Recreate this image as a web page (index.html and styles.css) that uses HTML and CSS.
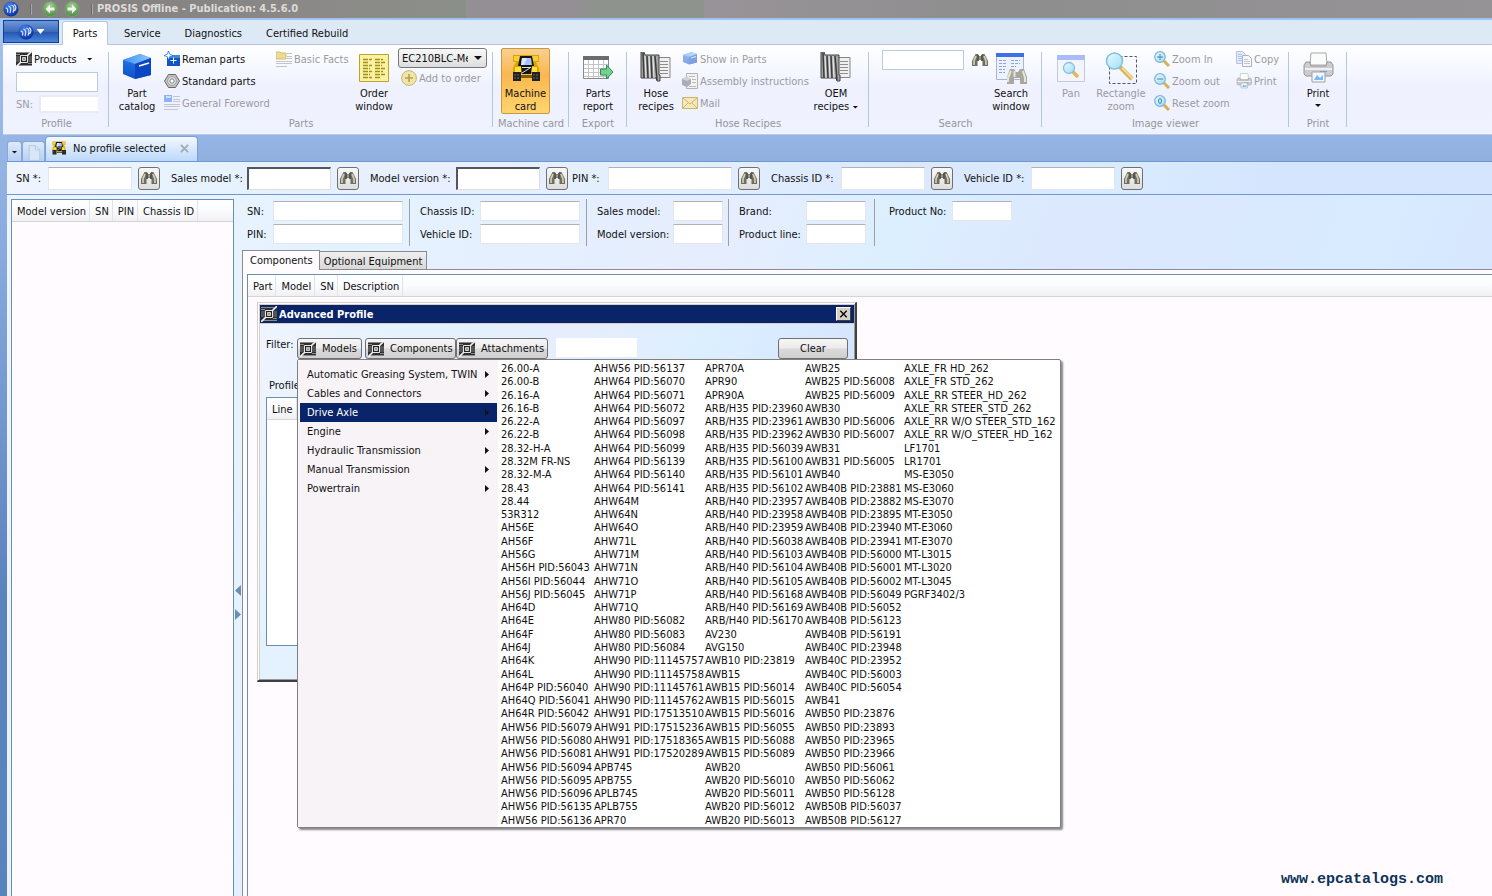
FILE: index.html
```html
<!DOCTYPE html>
<html lang="en">
<head>
<meta charset="utf-8">
<title>PROSIS Offline - Publication: 4.5.6.0</title>
<link rel="stylesheet" href="styles.css">
</head>
<body>
<svg class="sprite" aria-hidden="true">
  <defs>
    <radialGradient id="orb" cx="40%" cy="30%" r="70%"><stop offset="0" stop-color="#4a86f0"/><stop offset="1" stop-color="#0a2fa0"/></radialGradient>
    <radialGradient id="green" cx="50%" cy="30%" r="70%"><stop offset="0" stop-color="#a6cf96"/><stop offset="1" stop-color="#4f8a45"/></radialGradient>
    <linearGradient id="lens" x1="0" y1="0" x2="1" y2="1"><stop offset="0" stop-color="#e4fbff"/><stop offset="1" stop-color="#a5dcf5"/></linearGradient>
    <linearGradient id="top" x1="0" x2="1"><stop offset="0" stop-color="#3f93f2"/><stop offset="1" stop-color="#8cc6ff"/></linearGradient>
    <linearGradient id="front" x1="0" y1="0" x2="0" y2="1"><stop offset="0" stop-color="#2a7bea"/><stop offset="1" stop-color="#0f4fc8"/></linearGradient>
    <symbol id="i-orb" viewBox="0 0 16 16"><circle cx="8" cy="8" r="7.600" fill="url(#orb)"/><path d="M2.500 7q3 0 2 4.500M5.500 5q3.500 1 1.500 7M8.500 4q4 1.500 1.500 7.500M11 3.500q3.500 2.500.5 6.500" fill="none" stroke="#d8e8ff" stroke-width="1.200"/></symbol>
    <symbol id="i-back" viewBox="0 0 16 16"><circle cx="8" cy="8" r="7.500" fill="url(#green)" stroke="#7a9a70"/><path d="M8 3.500 3.500 8 8 12.500V9.500h4.500v-3H8z" fill="#eef5ea"/></symbol>
    <symbol id="i-product" viewBox="0 0 16 16"><path d="M0 1h16v14H0z" fill="#2e2e2e"/><path d="M0 1.500h13M0 3.500h4M12 12.500h4M1 14.500h15" stroke="#8b8b8b"/><path d="M0 5h4v6H0zM12 5h4v6h-4z" fill="#555"/><path d="M4.500 4.500h7v7h-7z" fill="#222" stroke="#e4e4e4"/><path d="M6.500 6.500h3v3h-3z" fill="#999" stroke="#ccc"/><path d="m11 5 5-5M0 16l5-5" stroke="#f4f4f4" stroke-width="1.600"/></symbol>
    <symbol id="i-cube" viewBox="0 0 32 32"><path d="M2 8 19 2l11 4v17L14 27 2 22z" fill="url(#front)"/><path d="M2 8 19 2l11 4-16 6z" fill="url(#top)"/><path d="m14 12 16-6v17l-16 4z" fill="#0b47c4"/><path d="m18 14 10-3" stroke="#fff" stroke-width="1.600"/></symbol>
    <symbol id="i-reman" viewBox="0 0 16 16"><path d="M3 4h13v11H3z" fill="#0d56c4"/><path d="M3 4h13v3H3z" fill="#3c86e4"/><path d="M9.500 6.500v6M6.500 9.500h6" stroke="#fff"/><path d="m4.500 0 1.200 3.300L9 4.500 5.700 5.700 4.500 9 3.300 5.700 0 4.500l3.300-1.200z" fill="#fff" stroke="#2c74d4" stroke-width=".8"/></symbol>
    <symbol id="i-nut" viewBox="0 0 16 16"><path d="M4.500 1.500h7L15.500 8l-4 6.500h-7L.5 8z" fill="#c4c4c0" stroke="#666"/><circle cx="8" cy="8" r="4.300" fill="#eee" stroke="#999"/><circle cx="8" cy="8" r="2.200" fill="#fff" stroke="#777"/></symbol>
    <symbol id="i-fore" viewBox="0 0 16 16"><path d="M0 0h8v7H0z" fill="#8ab4f5"/><path d="M2 1h5v2H2z" fill="#cfe0ff"/><path d="M9 1.500h7M9 4.500h7M9 6.500h7M0 9.500h16M0 11.500h16M0 14.500h14" stroke="#c3c3d3"/></symbol>
    <symbol id="i-facts" viewBox="0 0 16 16"><path d="M0 1h4l1 1h5v6H0z" fill="#eddb96" stroke="#d3bd6d"/><path d="M11 2.500h5M11 5.500h5M11 7.500h5M0 10.500h16M0 12.500h16M0 15.500h11" stroke="#c3c3cf"/></symbol>
    <symbol id="i-order" viewBox="0 0 32 32"><path d="M1.500 2.500h29v27h-29z" fill="#faf2a0" stroke="#b8a432"/><path d="M5 7.500h9M5 10.500h6M5 13.500h9M5 16.500h7M5 19.500h9M5 22.500h7M5 25.500h9M17 7.500h8M17 10.500h10M17 13.500h7M17 16.500h10M17 19.500h8M17 22.500h10M17 25.500h6" stroke="#a5901e" stroke-width="1.300" stroke-dasharray="5 1"/></symbol>
    <symbol id="i-add" viewBox="0 0 16 16"><circle cx="8" cy="8" r="7.400" fill="#efe4ab" stroke="#c6b66c"/><path d="M8 4v8M4 8h8" stroke="#b5a04a" stroke-width="1.600"/></symbol>
    <symbol id="i-truck" viewBox="0 0 32 32"><path d="M3 3h26v7h-3l3 6v6H3v-6l3-6H3z" fill="#d9a600"/><path d="M4 4h6v5H4zM22 4h6v5h-6z" fill="#f7cf32"/><path d="M10 4h12l2 10H8z" fill="#161616"/><path d="M12 6h9l1 7H11z" fill="#a9c2fb"/><path d="M12 6h5l-3 7h-3z" fill="#dbe6ff"/><path d="M5 15h6v5H5zM21 15h6v5h-6z" fill="#ffe03c"/><path d="M11 14h11l-1 8h-9z" fill="#151515"/><path d="m12 21 8-5M12 15.500h9" stroke="#ddd"/><path d="M3 20h8v9H3zM22 20h8v9h-8z" fill="#222"/><path d="M4 23h6M4 26h6M23 23h6M23 26h6" stroke="#666" stroke-dasharray="2 1"/><path d="M11 23h11v3H11z" fill="#7a5f00"/></symbol>
    <symbol id="i-report" viewBox="0 0 32 32"><path d="M1.500 4.500h25v22h-25z" fill="#fff" stroke="#8a8a8a"/><path d="M1 4h26v4H1z" fill="#6b6b6b"/><path d="M6.500 8v18M11.500 8v18M16.500 8v18M21.500 8v18M2 12.500h24M2 16.500h24M2 20.500h24M2 24.500h24" stroke="#c4c4c4"/><path d="M18.500 17h6v-4l6.500 7-6.500 7v-4h-6z" fill="#74d08e" stroke="#2f8a55"/></symbol>
    <symbol id="i-hose" viewBox="0 0 32 32"><path d="M17 5.500h13v20H17z" fill="#f0f0f0" stroke="#858585"/><path d="M20 9.500h8M20 12.500h8M20 15.500h8M20 18.500h8M20 21.500h8" stroke="#8e8e8e"/><path d="M1 0h3l1 3h14v20h1v6h-3l-1-3H1z" fill="#a4a4a4" stroke="#444"/><path d="m3 1 1 25M7 4l1 22M11 4l1 22M15 4l2 24" stroke="#3c3c3c" stroke-width="1.500"/><path d="m5 4 1 22M9 4l1 22M13 4l1 22" stroke="#eee"/></symbol>
    <symbol id="i-asm" viewBox="0 0 16 16"><path d="M4.500.5h11v15h-11z" fill="#f2f2f2" stroke="#b3b3b3"/><path d="M7 3.500h6M10 6.500h4M10 9.500h4M7 13.500h7" stroke="#bbb"/><path d="m0 6 4-2 5 2v5l-4 3-5-2z" fill="#a9adb5"/><path d="m0 6 4-2 5 2-4 2z" fill="#d0d3d8"/></symbol>
    <symbol id="i-mail" viewBox="0 0 16 16"><path d="M.5 2.500h15v11H.5z" fill="#f4e9b8" stroke="#c9b671"/><path d="m1 3 7 6 7-6M1 13l5-5M15 13l-5-5" fill="none" stroke="#c9b671"/></symbol>
    <symbol id="i-bino" viewBox="0 0 16 16"><path d="M3.500 2H6l1 2h2l1-2h2.500L16 9v5h-5.500V9h-1L9 8H7L6.500 9h-1v5H0V9z" fill="#6f6e62"/><path d="M4 4 2 9v4M12 4l2 5v4" fill="none" stroke="#d0cdb9" stroke-width="1.700"/><path d="M6 3v6M10 3v6" stroke="#3f3e37"/><path d="M7.500 4.500h1v3h-1z" fill="#c5c2b0"/></symbol>
    <symbol id="i-searchwin" viewBox="0 0 32 32"><path d="M1.500 1.500h27v26h-27z" fill="#edf2ff" stroke="#a8b4d8"/><path d="M1 1h28v4H1z" fill="#3f6fe8"/><path d="M4 8.500h8M16 8.500h9M4 11.500h8M4 14.500h8M4 17.500h6M4 20.500h6M16 11.500h9M16 14.500h5" stroke="#8fa4dd" stroke-dasharray="3 1"/><path d="M15 17h4l2 3h2l2-3h4l3 8v7h-7v-6h-6v6h-7v-7z" fill="#aaa79c"/><path d="m16 19-3 7v4M28 19l2 7v4M19.500 19v6" fill="none" stroke="#e8e5d8" stroke-width="2"/></symbol>
    <symbol id="i-pan" viewBox="0 0 32 32"><path d="M2.500 3.500h27v26h-27z" fill="#f4f5fa" stroke="#c4c8d8"/><path d="M2 3h28v5H2z" fill="#a9bcf7"/><path d="m17 19 6 6" stroke="#e0b95c" stroke-width="3.500"/><circle cx="14" cy="16" r="5.500" fill="url(#lens)" stroke="#84bfe0" stroke-width="1.300"/></symbol>
    <symbol id="i-rect" viewBox="0 0 32 32"><path d="M4.500 4.500h27v27h-27z" fill="none" stroke="#555" stroke-dasharray="3 2"/><path d="m15 15 12 12" stroke="#d7b55c" stroke-width="4.500"/><path d="m17 16 11 11" stroke="#f8e29e" stroke-width="1.500"/><circle cx="9.500" cy="9" r="8" fill="url(#lens)" stroke="#80bfe2" stroke-width="1.500"/></symbol>
    <symbol id="i-mag" viewBox="0 0 16 16"><path d="m10 10 5 5" stroke="#d9b04f" stroke-width="3"/><circle cx="6" cy="6" r="5.300" fill="url(#lens)" stroke="#79b5d8" stroke-width="1.200"/></symbol>
    <symbol id="i-copy" viewBox="0 0 16 16"><path d="M.5.5h6l3 3v9h-9z" fill="#e3eaff" stroke="#b5c2ea"/><path d="M2 3.500h4M2 5.500h5M2 7.500h5M2 9.500h5" stroke="#b5c2ea"/><path d="M6.500 4.500h6l3 3v8h-9z" fill="#f6f6fb" stroke="#b0b0ba"/><path d="M8 8.500h4M8 10.500h6M8 12.500h6" stroke="#c4c4cc"/></symbol>
    <symbol id="i-print" viewBox="0 0 32 32"><path d="M9 1h15l1 12H8z" fill="#fbfbfb" stroke="#a8a8a8"/><path d="M4 10h4l1 4h15l1-4h4l2 3v9l-2 2H4l-2-2v-9z" fill="#cbcbd0" stroke="#989898"/><path d="M4 14h26M3 16h27v2H3z" fill="#efeff2"/><path d="M18 19.500h7" stroke="#5aa7ee"/><path d="M10 20h13v10H10z" fill="#f0f7ff" stroke="#a0a0a0"/><path d="m12 28 3-5 3 3 3-3v5z" fill="#79b9f2"/></symbol>
    <symbol id="i-page" viewBox="0 0 16 18"><path d="M2.500.5h7l5 5v12h-12z" fill="#d9e6f8" stroke="#b4c8e2"/><path d="M9.500.5v5h5" fill="none" stroke="#b4c8e2"/></symbol>
  </defs>
</svg>

<header class="titlebar">
  <svg class="ic"><use href="#i-orb"/></svg>
  <span class="bar"></span>
  <button class="plain" aria-label="Back"><svg class="ic"><use href="#i-back"/></svg></button>
  <button class="plain flip" aria-label="Forward"><svg class="ic"><use href="#i-back"/></svg></button>
  <span class="bar"></span>
  <h1>PROSIS Offline - Publication: 4.5.6.0</h1>
</header>

<div class="ribbon">
  <nav class="ribbon-tabs">
    <button class="app-button" aria-label="Application menu"><svg class="ic"><use href="#i-orb"/></svg><i class="down white"></i></button>
    <button class="rtab active">Parts</button>
    <button class="rtab">Service</button>
    <button class="rtab">Diagnostics</button>
    <button class="rtab">Certified Rebuild</button>
  </nav>
  <div class="groups">
    <section class="group g-profile">
      <div class="gbody stack">
        <button class="small"><svg class="ic"><use href="#i-product"/></svg>Products<i class="down"></i></button>
        <input class="box profile-name" type="text" aria-label="Profile name">
        <div class="sn-row"><label for="psn">SN:</label><input id="psn" class="field" type="text" disabled></div>
      </div>
      <h2>Profile</h2>
    </section>
    <section class="group g-parts">
      <div class="gbody">
        <button class="big"><svg class="ic32"><use href="#i-cube"/></svg><span>Part<br>catalog</span></button>
        <div class="stack">
          <button class="small"><svg class="ic"><use href="#i-reman"/></svg>Reman parts</button>
          <button class="small"><svg class="ic"><use href="#i-nut"/></svg>Standard parts</button>
          <button class="small" disabled><svg class="ic"><use href="#i-fore"/></svg>General Foreword</button>
        </div>
        <div class="stack"><button class="small" disabled><svg class="ic"><use href="#i-facts"/></svg>Basic Facts</button></div>
        <button class="big"><svg class="ic32"><use href="#i-order"/></svg><span>Order<br>window</span></button>
        <div class="stack">
          <div class="combo"><select aria-label="Order"><option>EC210BLC-Me</option></select><i class="down"></i></div>
          <button class="small add" disabled><svg class="ic"><use href="#i-add"/></svg>Add to order</button>
        </div>
      </div>
      <h2>Parts</h2>
    </section>
    <section class="group g-machine">
      <div class="gbody"><button class="big hot"><svg class="ic32"><use href="#i-truck"/></svg><span>Machine<br>card</span></button></div>
      <h2>Machine card</h2>
    </section>
    <section class="group g-export">
      <div class="gbody"><button class="big"><svg class="ic32"><use href="#i-report"/></svg><span>Parts<br>report</span></button></div>
      <h2>Export</h2>
    </section>
    <section class="group g-hose">
      <div class="gbody">
        <button class="big"><svg class="ic32"><use href="#i-hose"/></svg><span>Hose<br>recipes</span></button>
        <div class="stack">
          <button class="small" disabled><svg class="ic faded"><use href="#i-cube"/></svg>Show in Parts</button>
          <button class="small" disabled><svg class="ic"><use href="#i-asm"/></svg>Assembly instructions</button>
          <button class="small" disabled><svg class="ic"><use href="#i-mail"/></svg>Mail</button>
        </div>
        <button class="big"><svg class="ic32"><use href="#i-hose"/></svg><span>OEM<br>recipes <i class="down"></i></span></button>
      </div>
      <h2>Hose Recipes</h2>
    </section>
    <section class="group g-search">
      <div class="gbody">
        <div class="quick"><input class="box" type="text" aria-label="Search"><button class="plain" aria-label="Search"><svg class="ic"><use href="#i-bino"/></svg></button></div>
        <button class="big"><svg class="ic32"><use href="#i-searchwin"/></svg><span>Search<br>window</span></button>
      </div>
      <h2>Search</h2>
    </section>
    <section class="group g-image">
      <div class="gbody">
        <button class="big" disabled><svg class="ic32"><use href="#i-pan"/></svg><span>Pan</span></button>
        <button class="big" disabled><svg class="ic32"><use href="#i-rect"/></svg><span>Rectangle<br>zoom</span></button>
        <div class="stack">
          <button class="small" disabled><svg class="ic" viewBox="0 0 16 16"><use href="#i-mag"/><path d="M3 6h6M6 3v6" stroke="#4b86ad"/></svg>Zoom In</button>
          <button class="small" disabled><svg class="ic" viewBox="0 0 16 16"><use href="#i-mag"/><path d="M3 6h6" stroke="#4b86ad"/></svg>Zoom out</button>
          <button class="small" disabled><svg class="ic" viewBox="0 0 16 16"><use href="#i-mag"/><ellipse cx="6" cy="6" rx="1.500" ry="2.500" fill="none" stroke="#4b86ad"/></svg>Reset zoom</button>
        </div>
        <div class="stack">
          <button class="small" disabled><svg class="ic"><use href="#i-copy"/></svg>Copy</button>
          <button class="small" disabled><svg class="ic"><use href="#i-print"/></svg>Print</button>
        </div>
      </div>
      <h2>Image viewer</h2>
    </section>
    <section class="group g-print">
      <div class="gbody"><button class="big"><svg class="ic32"><use href="#i-print"/></svg><span>Print</span><i class="down"></i></button></div>
      <h2>Print</h2>
    </section>
  </div>
</div>

<div class="workspace">
  <div class="doc-tabs">
    <button class="doc-mini" aria-label="Tab list"><i class="down"></i></button>
    <button class="doc-mini page" aria-label="New tab"><svg><use href="#i-page"/></svg></button>
    <div class="doc-tab"><svg class="ic"><use href="#i-truck"/></svg><span>No profile selected</span><button class="plain close" aria-label="Close tab"><svg viewBox="0 0 10 10"><path d="m1 1 8 8M9 1 1 9" stroke="#a4a9b2" stroke-width="2"/></svg></button></div>
  </div>

  <form class="filters">
    <div class="f"><label for="f1">SN *:</label><input id="f1" class="field" type="text"><button type="button" class="find" aria-label="Find SN"><svg class="ic"><use href="#i-bino"/></svg></button></div>
    <div class="f f-sales"><label for="f2">Sales model *:</label><input id="f2" class="field sunk" type="text"><button type="button" class="find" aria-label="Find sales model"><svg class="ic"><use href="#i-bino"/></svg></button></div>
    <div class="f f-version"><label for="f3">Model version *:</label><input id="f3" class="field sunk" type="text"><button type="button" class="find" aria-label="Find model version"><svg class="ic"><use href="#i-bino"/></svg></button></div>
    <div class="f f-pin"><label for="f4">PIN *:</label><input id="f4" class="field" type="text"><button type="button" class="find" aria-label="Find PIN"><svg class="ic"><use href="#i-bino"/></svg></button></div>
    <div class="f f-chassis"><label for="f5">Chassis ID *:</label><input id="f5" class="field" type="text"><button type="button" class="find" aria-label="Find chassis"><svg class="ic"><use href="#i-bino"/></svg></button></div>
    <div class="f f-vehicle"><label for="f6">Vehicle ID *:</label><input id="f6" class="field" type="text"><button type="button" class="find" aria-label="Find vehicle"><svg class="ic"><use href="#i-bino"/></svg></button></div>
  </form>

  <main class="main">
    <aside class="left-list">
      <table><thead><tr><th>Model version</th><th>SN</th><th>PIN</th><th>Chassis ID</th><td></td></tr></thead></table>
    </aside>
    <div class="splitter"><i class="tri left"></i><i class="tri right"></i></div>
    <div class="detail">
      <form class="info">
        <div class="pair p1"><label for="d1">SN:</label><input id="d1" class="field" type="text"><label for="d2">PIN:</label><input id="d2" class="field" type="text"></div>
        <div class="pair p2"><label for="d3">Chassis ID:</label><input id="d3" class="field" type="text"><label for="d4">Vehicle ID:</label><input id="d4" class="field" type="text"></div>
        <div class="pair p3"><label for="d5">Sales model:</label><input id="d5" class="field" type="text"><label for="d6">Model version:</label><input id="d6" class="field" type="text"></div>
        <div class="pair p4"><label for="d7">Brand:</label><input id="d7" class="field" type="text"><label for="d8">Product line:</label><input id="d8" class="field" type="text"></div>
        <div class="pair p5"><label for="d9">Product No:</label><input id="d9" class="field" type="text"></div>
      </form>
      <div class="tabs"><button class="tab active">Components</button><button class="tab">Optional Equipment</button></div>
      <div class="pane">
        <div class="grid">
          <table><thead><tr><th>Part</th><th>Model</th><th>SN</th><th>Description</th><td></td></tr></thead></table>
        </div>
        <span class="site">www.epcatalogs.com</span>

        <div class="dialog" role="dialog" aria-labelledby="dlg">
          <div class="dlg-title"><svg class="ic"><use href="#i-product"/></svg><h2 id="dlg">Advanced Profile</h2><button class="dlg-close" aria-label="Close"><svg viewBox="0 0 10 10"><path d="m1 1 8 8M9 1 1 9" stroke="#000" stroke-width="1.600"/></svg></button></div>
          <div class="dlg-body">
            <div class="dlg-filter">
              <label for="flt">Filter:</label>
              <button class="push w1"><svg class="ic"><use href="#i-product"/></svg>Models</button>
              <button class="push w2"><svg class="ic"><use href="#i-product"/></svg>Components</button>
              <button class="push w3"><svg class="ic"><use href="#i-product"/></svg>Attachments</button>
              <input id="flt" class="flat" type="text">
              <button class="push clear">Clear</button>
            </div>
            <h3>Profile</h3>
            <div class="profile-grid"><table><thead><tr><th>Line</th><td></td></tr></thead></table></div>
          </div>

          <div class="menu">
            <ul class="cats">
              <li>Automatic Greasing System, TWIN<i class="sub"></i></li>
              <li>Cables and Connectors<i class="sub"></i></li>
              <li class="on">Drive Axle<i class="sub"></i></li>
              <li>Engine<i class="sub"></i></li>
              <li>Hydraulic Transmission<i class="sub"></i></li>
              <li>Manual Transmission<i class="sub"></i></li>
              <li>Powertrain<i class="sub"></i></li>
            </ul>
            <ul class="models">
              <li>26.00-A<li>26.00-B<li>26.16-A<li>26.16-B<li>26.22-A<li>26.22-B<li>28.32-H-A<li>28.32M FR-NS<li>28.32-M-A<li>28.43<li>28.44<li>53R312<li>AH56E<li>AH56F<li>AH56G<li>AH56H PID:56043<li>AH56I PID:56044<li>AH56J PID:56045<li>AH64D<li>AH64E<li>AH64F<li>AH64J<li>AH64K<li>AH64L<li>AH64P PID:56040<li>AH64Q PID:56041<li>AH64R PID:56042<li>AHW56 PID:56079<li>AHW56 PID:56080<li>AHW56 PID:56081<li>AHW56 PID:56094<li>AHW56 PID:56095<li>AHW56 PID:56096<li>AHW56 PID:56135<li>AHW56 PID:56136
              <li>AHW56 PID:56137<li>AHW64 PID:56070<li>AHW64 PID:56071<li>AHW64 PID:56072<li>AHW64 PID:56097<li>AHW64 PID:56098<li>AHW64 PID:56099<li>AHW64 PID:56139<li>AHW64 PID:56140<li>AHW64 PID:56141<li>AHW64M<li>AHW64N<li>AHW64O<li>AHW71L<li>AHW71M<li>AHW71N<li>AHW71O<li>AHW71P<li>AHW71Q<li>AHW80 PID:56082<li>AHW80 PID:56083<li>AHW80 PID:56084<li>AHW90 PID:11145757<li>AHW90 PID:11145758<li>AHW90 PID:11145761<li>AHW90 PID:11145762<li>AHW91 PID:17513510<li>AHW91 PID:17515236<li>AHW91 PID:17518365<li>AHW91 PID:17520289<li>APB745<li>APB755<li>APLB745<li>APLB755<li>APR70
              <li>APR70A<li>APR90<li>APR90A<li>ARB/H35 PID:23960<li>ARB/H35 PID:23961<li>ARB/H35 PID:23962<li>ARB/H35 PID:56039<li>ARB/H35 PID:56100<li>ARB/H35 PID:56101<li>ARB/H35 PID:56102<li>ARB/H40 PID:23957<li>ARB/H40 PID:23958<li>ARB/H40 PID:23959<li>ARB/H40 PID:56038<li>ARB/H40 PID:56103<li>ARB/H40 PID:56104<li>ARB/H40 PID:56105<li>ARB/H40 PID:56168<li>ARB/H40 PID:56169<li>ARB/H40 PID:56170<li>AV230<li>AVG150<li>AWB10 PID:23819<li>AWB15<li>AWB15 PID:56014<li>AWB15 PID:56015<li>AWB15 PID:56016<li>AWB15 PID:56055<li>AWB15 PID:56088<li>AWB15 PID:56089<li>AWB20<li>AWB20 PID:56010<li>AWB20 PID:56011<li>AWB20 PID:56012<li>AWB20 PID:56013
              <li>AWB25<li>AWB25 PID:56008<li>AWB25 PID:56009<li>AWB30<li>AWB30 PID:56006<li>AWB30 PID:56007<li>AWB31<li>AWB31 PID:56005<li>AWB40<li>AWB40B PID:23881<li>AWB40B PID:23882<li>AWB40B PID:23895<li>AWB40B PID:23940<li>AWB40B PID:23941<li>AWB40B PID:56000<li>AWB40B PID:56001<li>AWB40B PID:56002<li>AWB40B PID:56049<li>AWB40B PID:56052<li>AWB40B PID:56123<li>AWB40B PID:56191<li>AWB40C PID:23948<li>AWB40C PID:23952<li>AWB40C PID:56003<li>AWB40C PID:56054<li>AWB41<li>AWB50 PID:23876<li>AWB50 PID:23893<li>AWB50 PID:23965<li>AWB50 PID:23966<li>AWB50 PID:56061<li>AWB50 PID:56062<li>AWB50 PID:56128<li>AWB50B PID:56037<li>AWB50B PID:56127
              <li>AXLE_FR HD_262<li>AXLE_FR STD_262<li>AXLE_RR STEER_HD_262<li>AXLE_RR STEER_STD_262<li>AXLE_RR W/O STEER_STD_162<li>AXLE_RR W/O_STEER_HD_162<li>LF1701<li>LR1701<li>MS-E3050<li>MS-E3060<li>MS-E3070<li>MT-E3050<li>MT-E3060<li>MT-E3070<li>MT-L3015<li>MT-L3020<li>MT-L3045<li>PGRF3402/3
            </ul>
          </div>
        </div>
      </div>
    </div>
  </main>
</div>
</body>
</html>
```
FILE: styles.css
```css
* { box-sizing: border-box; }
body { margin: 0; height: 100vh; display: flex; flex-direction: column; overflow: hidden; font: 11px/13px "DejaVu Sans Condensed", Tahoma, sans-serif; color: #111; background: linear-gradient(#a4c4f2, #94b4e4 160px, #5a82bd 600px, #5884be); }
button, input, select { font: inherit; color: inherit; margin: 0; padding: 0; border: 0; border-radius: 0; background: none; }
h1, h2, h3, ul, form { margin: 0; padding: 0; font-size: 11px; font-weight: normal; }
ul { list-style: none; }
button:disabled { color: #9b9b9f; }
.sprite { position: absolute; width: 0; height: 0; }
.ic { width: 16px; height: 16px; flex: none; display: block; }
.ic32 { width: 32px; height: 32px; display: block; flex: none; }
.faded { opacity: .5; }
.plain { display: block; }
.flip { transform: scaleX(-1); }
.down { display: inline-block; width: 6px; height: 3px; background: #111; clip-path: polygon(0 0, 100% 0, 50% 100%); vertical-align: middle; }
.white { width: 8px; height: 5px; background: #fff; }

.titlebar { height: 18px; flex: none; display: flex; align-items: center; padding-left: 3px; background: linear-gradient(90deg, #827e7e 0, #8b8a88 330px, #8b8f89 466px, #938f95 466px, #938f95 584px, #8e938d 584px, #8e938d 704px, #989398 704px, #8e8e8e 1000px, #969396); }
.titlebar h1 { font-weight: bold; line-height: 16px; color: #dedbd8; margin-left: 4px; }
.bar { width: 2px; height: 11px; background: #6d6b6b; border-right: 1px solid #a8a6a6; margin-left: 11px; }
.titlebar .plain { margin-left: 10px; }
.titlebar .flip { margin-left: 6px; }

.ribbon { flex: none; margin-left: 3px; margin-top: 2px; border-bottom: 1px solid #c0cbe0; background: #f0f3ff; }
.ribbon-tabs { display: flex; height: 25px; background: #dde9f5; border-bottom: 1px solid #b4c8e4; }
.app-button { width: 56px; height: 23px; display: flex; align-items: center; justify-content: center; gap: 3px; background: linear-gradient(#6f97d8, #3c6cbc 50%, #2456ac 52%, #4a86dc); border: 1px solid #123f8f; }
.rtab { height: 25px; padding: 2px 0 0; margin-left: 24px; }
.rtab.active { width: 46px; margin: 1px -8px 0 3px; height: 24px; padding: 0; background: #fff; border: 1px solid #b4c8e4; border-bottom: 0; border-radius: 3px 3px 0 0; }
.groups { display: flex; height: 89px; padding: 3px 0 5px 1px; background: linear-gradient(#fff, #f3f6ff 35%, #eff1ff 45%, #eff2ff); }
.group { flex: none; display: flex; flex-direction: column; background: linear-gradient(#b2c8e0, #b2c8e0) right 4px / 1px 75px no-repeat; }
.gbody { flex: 1; display: flex; align-items: flex-start; }
.group h2 { text-align: center; line-height: 10px; color: #96969b; }
.g-profile { width: 105px; } .g-parts { width: 384px; } .g-machine { width: 76px; } .g-export, .g-print { width: 58px; } .g-hose { width: 242px; } .g-search { width: 173px; } .g-image { width: 247px; }
.stack { display: flex; flex-direction: column; align-items: flex-start; }
.small { display: flex; align-items: center; gap: 2px; height: 22px; white-space: nowrap; }
.small .down { margin-left: 8px; }
.big { flex: none; width: 46px; display: flex; flex-direction: column; align-items: center; padding-top: 4px; white-space: nowrap; line-height: 13px; text-align: center; }
.big .ic32 { margin-bottom: 3px; }
.big > .down { margin-top: 4px; }
.box { height: 20px; background: #fff; border: 1px solid #b7cbe2; width: 82px; }
.field { background: #fff; border: 1px solid #e4e6ee; border-top-color: #aeb2bb; min-width: 0; }
.g-profile .gbody { padding-left: 12px; }
.profile-name { margin-top: 2px; }
.sn-row { display: flex; align-items: center; gap: 6px; margin-top: 3px; color: #9b9b9f; }
.sn-row .field { width: 59px; height: 18px; border: 2px solid #e9eaf2; border-right: 0; }
.g-parts .gbody { display: grid; grid-template-columns: 50px 112px 75px 47px 89px; padding-left: 5px; }
.combo { position: relative; width: 89px; height: 20px; }
.combo select { appearance: none; width: 100%; height: 20px; padding: 0 18px 0 3px; border: 1px solid #777; border-radius: 3px; background: linear-gradient(#f8f8f8, #ececec 50%, #dcdcdc); overflow: hidden; }
.combo .down { position: absolute; right: 5px; top: 8px; width: 8px; height: 4px; pointer-events: none; }
.add { margin-left: 3px; height: 20px; }
.g-machine .gbody { padding-left: 8px; }
.hot { width: 49px; height: 66px; padding-top: 3px; border: 1px solid #c79a3c; border-radius: 2px; background: linear-gradient(#f8cf90, #fbb750 40%, #ffd56e); }
.g-export .gbody, .g-print .gbody { justify-content: center; }
.g-hose .gbody { display: grid; grid-template-columns: 49px 128px 52px; padding-left: 6px; }
.g-hose .big:last-child { width: 52px; }
.g-search .gbody { padding-left: 13px; }
.quick { display: flex; align-items: center; gap: 8px; margin-top: 2px; }
.g-image .gbody { display: grid; grid-template-columns: 42px 60px 82px 46px; padding-left: 10px; }
.g-image .big { width: 38px; }
.g-image .big + .big { width: 54px; }

.workspace { flex: 1; min-height: 0; margin-left: 7px; display: flex; flex-direction: column; }
.doc-tabs { height: 27px; flex: none; display: flex; align-items: flex-end; background: linear-gradient(#94b5e7, #92b0dc); border-bottom: 1px solid #6c98d4; }
.doc-mini { width: 15px; height: 20px; border: 1px solid #86a8da; border-bottom: 0; border-radius: 3px 3px 0 0; background: linear-gradient(#dfeafb, #b5d0f3); }
.page { width: 23px; }
.page svg { width: 14px; height: 16px; display: block; margin: 2px auto 0; }
.doc-tab { width: 153px; height: 25px; display: flex; align-items: center; gap: 6px; padding: 0 8px 2px 5px; border: 1px solid #79a0d8; border-bottom: 0; border-radius: 4px 4px 0 0; background: linear-gradient(#f4f9ff, #d7e8fd 50%, #bcd8fa); }
.close { margin-left: auto; }
.close svg { width: 9px; height: 9px; display: block; }
.filters { height: 33px; flex: none; display: flex; align-items: center; gap: 11px; padding-left: 9px; border-bottom: 1px solid #6c98d4; background: linear-gradient(110deg, #f0f4ff 0, #e6f3ff 12%, #e9effe 30%, #e2f0ff 45%, #dce8fd 60%, #d8ebff 75%, #d5e5fe 85%); }
.f { display: flex; align-items: center; flex: none; }
.f label { width: 32px; white-space: nowrap; }
.f .field { width: 84px; height: 23px; margin-right: 6px; }
.f-sales label { width: 76px; } .f-version label { width: 86px; } .f-pin label { width: 36px; } .f-chassis label { width: 70px; } .f-vehicle label { width: 67px; }
.f-pin { margin-left: -7px; }
.f-pin .field { width: 124px; }
.f .sunk { border: 1px solid #ddd; border-top: 2px solid #55565a; border-left: 2px solid #55565a; }
.find { width: 22px; height: 23px; display: flex; align-items: center; justify-content: center; border: 1px solid #707070; border-radius: 3px; background: linear-gradient(#f8f8f8, #ddd); }

.main { flex: 1; min-height: 0; display: flex; padding: 4px 0 0 4px; background: linear-gradient(110deg, #eef4ff 0, #e4f2ff 20%, #e6edfe 42%, #dcefff 52%, #dce8fd 62%, #d8ebff 80%, #d5e4fe 90%); }
.left-list { width: 223px; flex: none; background: #fffbff; border: 1px solid #6a8fb0; border-bottom: 0; }
table { width: 100%; border-collapse: collapse; }
th, td { height: 21px; padding: 2px 3px 0 5px; font-weight: normal; text-align: left; white-space: nowrap; background: linear-gradient(#fff, #fafbfe 50%, #f0f0f2); border-right: 1px solid #e2e3ea; border-bottom: 1px solid #d5d5d5; }
td { width: 100%; border-right: 0; padding: 0; }
.splitter { width: 8px; flex: none; display: flex; flex-direction: column; align-items: center; padding-top: 386px; gap: 13px; }
.tri { width: 6px; height: 11px; background: #6a8fb0; }
.left { clip-path: polygon(100% 0, 0 50%, 100% 100%); }
.right { clip-path: polygon(0 0, 100% 50%, 0 100%); }
.detail { flex: 1; min-width: 0; display: flex; flex-direction: column; }
.info { height: 51px; display: flex; align-items: flex-start; padding-left: 5px; }
.pair { display: grid; grid-template-columns: 26px 130px; grid-auto-rows: 20px; row-gap: 3px; align-items: center; height: 47px; padding: 2px 6px 0 0; margin-right: 10px; border-right: 1px solid #9aa0aa; white-space: nowrap; }
.pair .field { height: 20px; width: 100%; }
.p2 { grid-template-columns: 60px 100px; } .p3 { grid-template-columns: 76px 50px; padding-right: 5px; } .p4 { grid-template-columns: 67px 60px; padding-right: 8px; margin-right: 14px; } .p5 { grid-template-columns: 63px 60px; border: 0; }
.tabs { display: flex; align-items: flex-end; height: 19px; }
.tab { height: 18px; padding: 1px 4px 0; border: 1px solid #8a8c92; border-left: 0; border-bottom: 0; background: linear-gradient(#f0f0f0, #d8d8d8); }
.tab.active { height: 20px; margin-bottom: -1px; padding: 0 6px 0 7px; border-left: 1px solid #8a8c92; background: #fffbff; z-index: 1; }
.pane { flex: 1; min-height: 0; position: relative; display: flex; padding: 4px 0 0 4px; border: 1px solid #8a8c92; border-width: 1px 0 0 1px; background: #fffbff; }
.grid { flex: 1; border: 1px solid #6a8fb0; border-width: 1px 0 0 1px; }
.site { position: absolute; right: 49px; bottom: 9px; font: bold 15px/14px "Liberation Mono", monospace; color: #0d3358; }

.dialog { position: absolute; left: 14px; top: 32px; width: 600px; height: 380px; display: flex; flex-direction: column; border: 1px solid #d4d0c8; border-right: 2px solid #404040; border-bottom: 2px solid #404040; box-shadow: inset 1px 1px #fff, inset -1px -1px #999; padding: 2px 1px 1px 2px; background: #d4d0c8; }
.dlg-title { height: 18px; flex: none; display: flex; align-items: center; gap: 2px; padding: 0 3px 0 1px; background: #0a246a; color: #fff; }
.dlg-title h2 { flex: 1; font-weight: bold; }
.dlg-close { width: 15px; height: 14px; background: #d4d0c8; border: 1px solid #fff; border-right-color: #404040; border-bottom-color: #404040; }
.dlg-close svg { width: 9px; height: 8px; display: block; margin: auto; }
.dlg-body { flex: 1; padding: 14px 6px 33px; display: flex; flex-direction: column; background: linear-gradient(115deg, #f0f4ff 0, #e4f2ff 20%, #e6edfe 42%, #dcefff 60%, #d6e5fe 80%); margin-top: 1px; }
.dlg-filter { display: flex; }
.dlg-filter label { width: 31px; }
.push { height: 21px; display: flex; align-items: center; gap: 6px; padding-left: 2px; border: 1px solid #707070; border-radius: 3px; background: linear-gradient(#f6f6f6, #ebebeb 48%, #dadada 52%, #cfcfcf); }
.w1 { width: 65px; margin-right: 3px; } .w2 { width: 91px; } .w3 { width: 92px; }
.flat { width: 81px; height: 19px; margin-left: 8px; background: #fff; }
.clear { width: 70px; margin-left: auto; padding: 0; justify-content: center; }
.dlg-body h3 { margin: 20px 0 5px 3px; }
.profile-grid { flex: 1; background: #fff; border: 1px solid #6a8fb0; }

.menu { position: absolute; left: 39px; top: 56px; width: 764px; height: 469px; display: flex; border: 1px solid #808080; border-radius: 2px; background: #fff; box-shadow: 2px 2px 2px #0007; }
.cats { width: 200px; flex: none; padding: 5px 1px 0 2px; background: #f7f3f7; }
.cats li { height: 19px; padding: 0 8px 0 7px; display: flex; align-items: center; justify-content: space-between; white-space: nowrap; }
.cats .on { background: #0a246a; color: #fff; }
.sub { width: 4px; height: 7px; background: #111; clip-path: polygon(0 0, 100% 50%, 0 100%); }
.models { flex: 1; display: grid; grid-auto-flow: column; grid-template-rows: repeat(35, 1fr); grid-template-columns: 93px 111px 100px 99px 1fr; padding: 2px 0 0 3px; }
.models li { white-space: nowrap; min-height: 0; }
```
